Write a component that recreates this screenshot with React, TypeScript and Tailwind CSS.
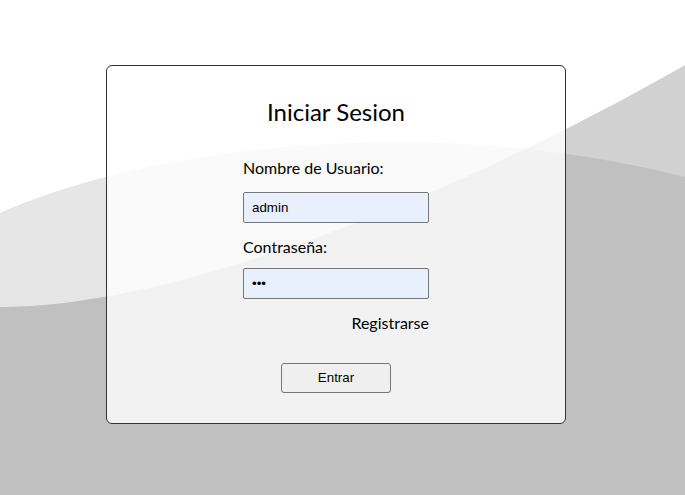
import React from "react";

const Waves = () => (
  <svg
    className="absolute inset-0 h-full w-full"
    viewBox="0 0 685 495"
    preserveAspectRatio="none"
  >
    <defs>
      <clipPath id="lower">
        <path d="M0 307 C150 308 410 222 685 65 L685 495 L0 495 Z" />
      </clipPath>
    </defs>
    <rect width="685" height="495" fill="#ffffff" />
    <path d="M0 213 C140 150 420 110 685 177 L685 495 L0 495 Z" fill="#e6e6e6" />
    <path d="M0 307 C150 308 410 222 685 65 L685 495 L0 495 Z" fill="#d1d1d1" />
    <path
      d="M0 213 C140 150 420 110 685 177 L685 495 L0 495 Z"
      fill="#c0c0c0"
      clipPath="url(#lower)"
    />
  </svg>
);

const App = () => {
  return (
    <div className="relative h-[495px] w-full overflow-hidden font-['Lato','Noto_Sans',sans-serif]">
      <Waves />
      <div className="relative pl-[106px] pt-[65px]">
        <form className="flex h-[359px] w-[460px] flex-col items-center rounded-md border border-[#333333] bg-white/80">
          <h1 className="mt-[30px] text-[24px] leading-8 text-black">Iniciar Sesion</h1>

          <div className="mt-[30px] flex w-[186px] flex-col">
            <label className="text-[16px] leading-5 text-black">Nombre de Usuario:</label>
            <input
              type="text"
              defaultValue="admin"
              className="mt-[14px] h-[31px] rounded-[2px] border border-[#767676] bg-[#e8f0fe] px-2 font-['Liberation_Sans',Arial,sans-serif] text-[13.33px] text-black outline-none"
            />
            <label className="mt-[14px] text-[16px] leading-5 text-black">Contraseña:</label>
            <input
              type="password"
              defaultValue="123"
              className="mt-[11px] h-[31px] rounded-[2px] border border-[#767676] bg-[#e8f0fe] px-2 font-['Liberation_Sans',Arial,sans-serif] text-[13.33px] text-black outline-none"
            />
            <a href="#" className="mt-[14px] self-end text-[16px] leading-5 text-black">
              Registrarse
            </a>
          </div>

          <button
            type="button"
            className="mt-[30px] h-[30px] w-[110px] rounded-[3px] border border-[#767676] bg-[#efefef] font-['Liberation_Sans',Arial,sans-serif] text-[13.33px] text-black"
          >
            Entrar
          </button>
        </form>
      </div>
    </div>
  );
};

export default App;
